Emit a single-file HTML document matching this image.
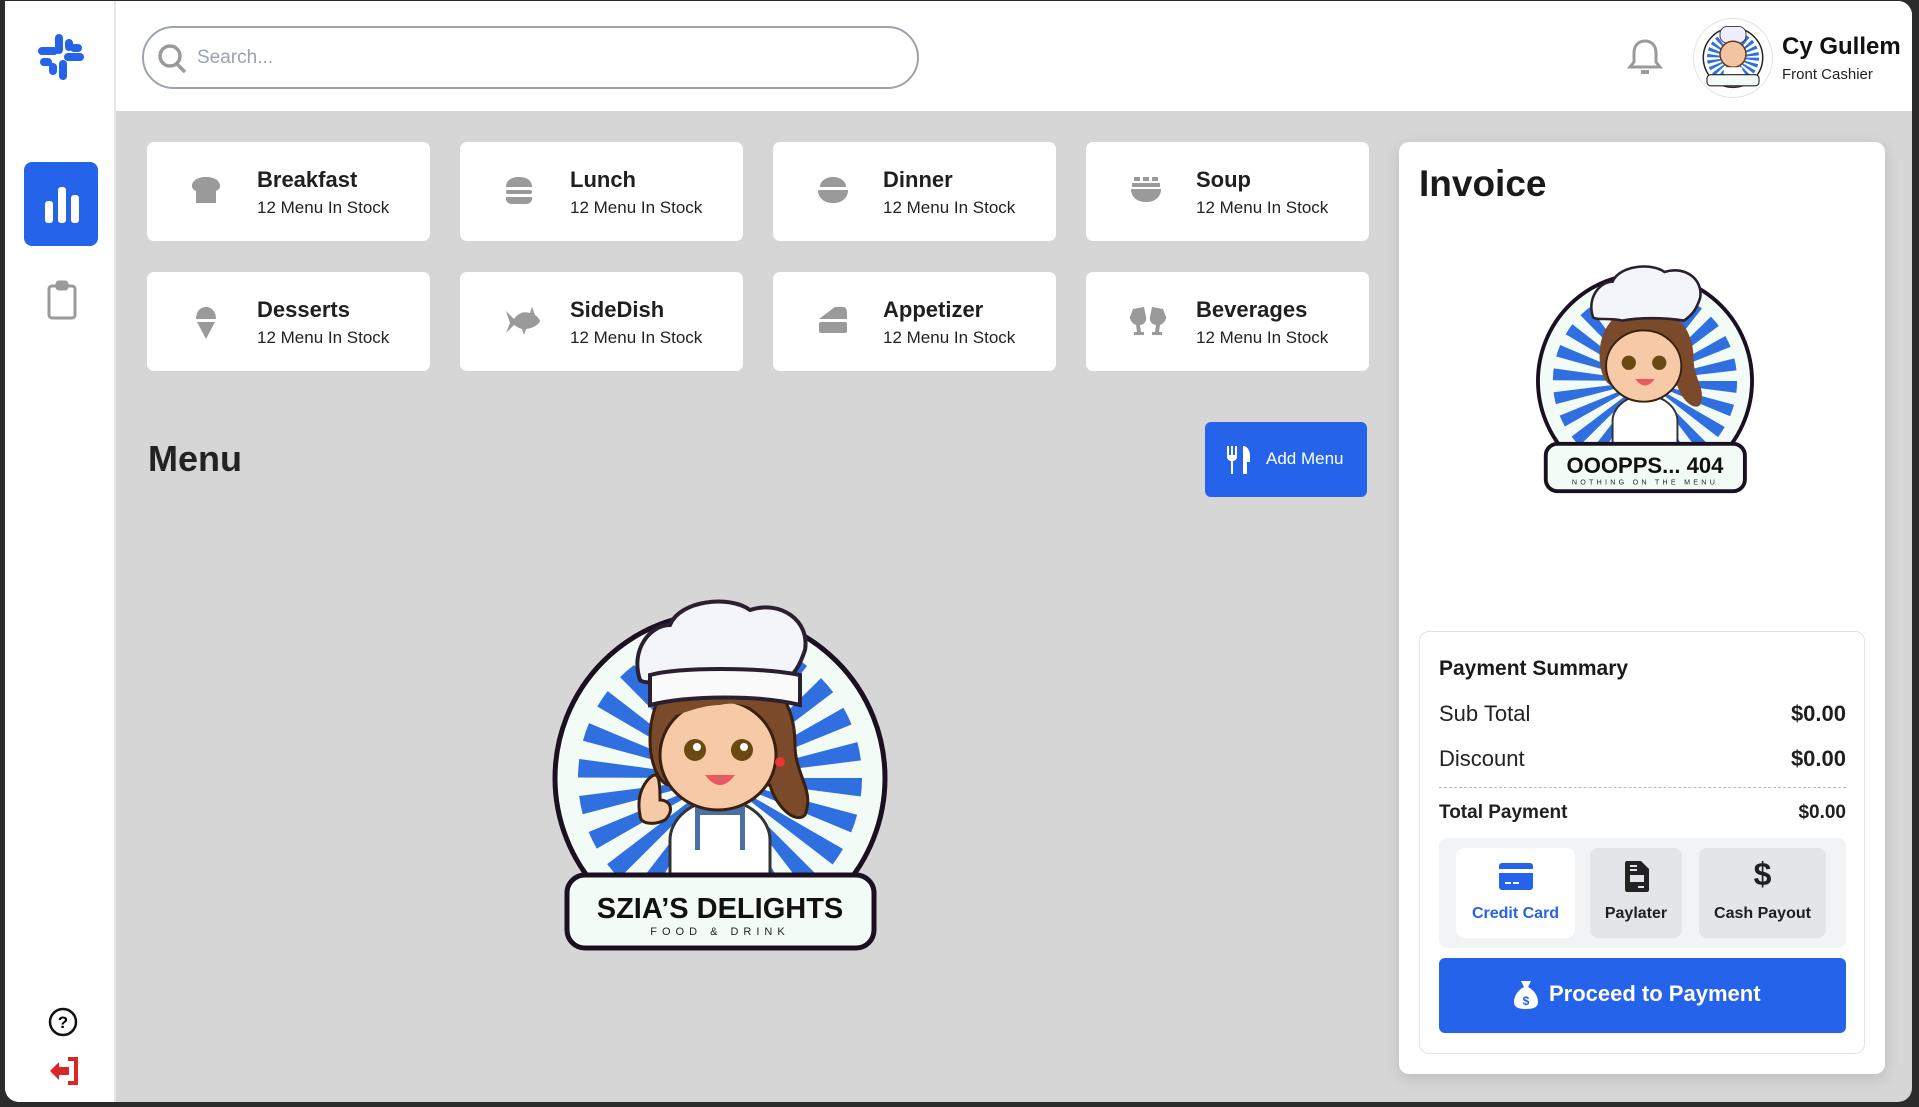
<!DOCTYPE html>
<html><head><meta charset="utf-8"><style>
*{box-sizing:border-box;margin:0;padding:0}
body{width:1919px;height:1107px;background:#2b2b2b;font-family:"Liberation Sans",sans-serif;position:relative;overflow:hidden;color:#1f1f1f}
#app{position:absolute;left:5px;top:1px;width:1907px;height:1101px;background:#d6d6d6;border-radius:0 14px 14px 14px;overflow:hidden}
#side{position:absolute;left:0;top:0;width:111px;height:100%;background:#fff;border-right:2px solid #e6e6e6}
#head{position:absolute;left:111px;top:0;right:0;height:110px;background:#fff}
.abs{position:absolute}
.card{position:absolute;width:283px;height:99px;background:#fff;border-radius:7px}
.card svg{position:absolute;left:44px;top:33px}
.card .t{position:absolute;left:110px;top:25px;font-size:22px;font-weight:bold}
.card .s{position:absolute;left:110px;top:56px;font-size:17px;color:#222}
</style></head><body>
<div id="app">
<div id="side">
 <svg class="abs" style="left:33px;top:33px" width="46" height="46" viewBox="0 0 46 46" fill="#2563eb">
  <rect x="17" y="0" width="8" height="20" rx="4"/><rect x="27" y="5" width="8" height="12" rx="4"/>
  <rect x="0" y="13" width="20" height="8" rx="4"/><rect x="26" y="19" width="20" height="8" rx="4"/>
  <rect x="21" y="26" width="8" height="20" rx="4"/><rect x="11" y="29" width="8" height="12" rx="4"/>
  <rect x="2" y="24" width="12" height="8" rx="4"/><rect x="32" y="10" width="12" height="8" rx="4"/>
 </svg>
 <div class="abs" style="left:19px;top:161px;width:74px;height:84px;background:#2563eb;border-radius:8px"></div>
 <svg class="abs" style="left:40px;top:186px" width="34" height="36" viewBox="0 0 34 36" fill="#fff"><rect x="0" y="14" width="8" height="22" rx="3"/><rect x="13" y="0" width="8" height="36" rx="3"/><rect x="26" y="8" width="8" height="28" rx="3"/></svg>
 <svg class="abs" style="left:42px;top:279px" width="32" height="40" viewBox="0 0 32 40" fill="none" stroke="#9a9a9a" stroke-width="3"><rect x="2" y="6" width="26" height="32" rx="3"/><rect x="10" y="2" width="10" height="7" rx="2" fill="#9a9a9a"/></svg>
 <svg class="abs" style="left:43px;top:1006px" width="30" height="30" viewBox="0 0 30 30"><circle cx="15" cy="15" r="13" fill="none" stroke="#111" stroke-width="2.5"/><text x="15" y="21" font-size="17" font-weight="bold" text-anchor="middle" font-family="Liberation Sans">?</text></svg>
 <svg class="abs" style="left:43px;top:1056px" width="32" height="28" viewBox="0 0 32 28"><path d="M20 2h8v24h-8" fill="none" stroke="#dc2626" stroke-width="4"/><path d="M2 14l9-9v5h10v8H11v5z" fill="#dc2626"/></svg>
</div>
<div id="head">
 <div class="abs" style="left:26px;top:25px;width:777px;height:63px;border:2px solid #9ca3af;border-radius:32px"></div>
 <svg class="abs" style="left:41px;top:42px" width="32" height="32" viewBox="0 0 32 32" fill="none" stroke="#9a9a9a" stroke-width="3.5"><circle cx="13" cy="13" r="10"/><path d="M20 21l8 8"/></svg>
 <div class="abs" style="left:81px;top:46px;font-size:19px;color:#9ca3af">Search...</div>
 <svg class="abs" style="left:1511px;top:36px" width="36" height="40" viewBox="0 0 36 40" fill="none" stroke="#9a9a9a" stroke-width="3"><path d="M18 4c-7 0-11 5-11 12v9l-4 5h30l-4-5v-9c0-7-4-12-11-12z"/><path d="M14 35h8" stroke-width="4"/></svg>
 <div class="abs" style="left:1577px;top:17px;width:80px;height:80px;border-radius:50%;border:1px solid #e2e2e2;overflow:hidden">
  <svg width="78" height="78" viewBox="-30 -20 420 420"><circle cx="180" cy="188" r="160" fill="#fff" stroke="#222" stroke-width="8"/><circle cx="180" cy="188" r="70" fill="none" stroke="#2f6fdf" stroke-width="140" stroke-dasharray="9.16 9.16"/><rect x="110" y="20" width="140" height="90" rx="40" fill="#eef" stroke="#333" stroke-width="5"/><circle cx="180" cy="170" r="70" fill="#f2c4a0" stroke="#5a3a22" stroke-width="8"/><rect x="130" y="240" width="100" height="70" fill="#fff"/><rect x="40" y="280" width="280" height="60" rx="20" fill="#f3fbf7" stroke="#222" stroke-width="6"/></svg>
 </div>
 <div class="abs" style="left:1666px;top:32px;font-size:24px;font-weight:bold;color:#111">Cy Gullem</div>
 <div class="abs" style="left:1666px;top:65px;font-size:15px;color:#222">Front Cashier</div>
</div>

<div class="card" style="left:142px;top:141px"><svg width="30" height="30" viewBox="0 0 30 30" fill="#9a9a9a"><path d="M15 2C6 2 1 6 1 11c0 3 2 4 4 5v12h20V16c2-1 4-2 4-5 0-5-5-9-14-9z"/></svg><div class="t">Breakfast</div><div class="s">12 Menu In Stock</div></div>
<div class="card" style="left:455px;top:141px"><svg width="30" height="30" viewBox="0 0 30 30" fill="#9a9a9a"><path d="M2 12C2 5 8 2 15 2s13 3 13 10z"/><rect x="2" y="15" width="26" height="4" rx="2"/><path d="M2 22h26v2c0 3-3 5-6 5H8c-3 0-6-2-6-5z"/></svg><div class="t">Lunch</div><div class="s">12 Menu In Stock</div></div>
<div class="card" style="left:768px;top:141px"><svg width="32" height="30" viewBox="0 0 32 30" fill="#9a9a9a"><path d="M3 12c0-6 6-10 13-10s13 4 13 10z"/><path d="M1 15h30c0 8-6 13-15 13S1 23 1 15z"/></svg><div class="t">Dinner</div><div class="s">12 Menu In Stock</div></div>
<div class="card" style="left:1081px;top:141px"><svg width="32" height="30" viewBox="0 0 32 30" fill="#9a9a9a"><path d="M2 8h28v4H2zM4 2h6v4H4zM13 2h6v4h-6zM22 2h6v4h-6z"/><path d="M1 14h30c0 8-6 13-15 13S1 22 1 14z"/></svg><div class="t">Soup</div><div class="s">12 Menu In Stock</div></div>
<div class="card" style="left:142px;top:271px"><svg width="30" height="36" viewBox="0 0 30 36" fill="#9a9a9a"><path d="M5 14c0-7 4-12 10-12s10 5 10 12z"/><path d="M6 17h18l-9 17z"/></svg><div class="t">Desserts</div><div class="s">12 Menu In Stock</div></div>
<div class="card" style="left:455px;top:271px"><svg width="36" height="32" viewBox="0 0 36 32" fill="#9a9a9a"><path d="M2 6l8 8c4-6 10-8 16-6l2-6 3 8c3 2 5 5 5 6s-4 7-14 8l-2 6-2-6c-4-1-6-3-8-4l-8 8 4-10z"/></svg><div class="t">SideDish</div><div class="s">12 Menu In Stock</div></div>
<div class="card" style="left:768px;top:271px"><svg width="32" height="30" viewBox="0 0 32 30" fill="#9a9a9a"><path d="M2 14L18 2h8c3 0 4 3 4 6v6z"/><rect x="2" y="17" width="28" height="11" rx="2"/></svg><div class="t">Appetizer</div><div class="s">12 Menu In Stock</div></div>
<div class="card" style="left:1081px;top:271px"><svg width="36" height="32" viewBox="0 0 36 32" fill="#9a9a9a"><path d="M3 4l11-2 2 10c1 5-3 8-6 8l1 7h3v3H4v-3h3l-1-7c-3-1-6-4-6-8zM33 4L22 2l-2 10c-1 5 3 8 6 8l-1 7h-3v3h10v-3h-3l1-7c3-1 6-4 6-8z"/></svg><div class="t">Beverages</div><div class="s">12 Menu In Stock</div></div>

<div class="abs" style="left:143px;top:437px;font-size:36px;font-weight:bold;color:#222">Menu</div>
<div class="abs" style="left:1200px;top:421px;width:162px;height:75px;background:#2563eb;border-radius:6px"></div>
<svg class="abs" style="left:1220px;top:445px" width="26" height="28" viewBox="0 0 26 28" fill="#fff"><path d="M2 0h2v9h2V0h2v9h2V0h2v11c0 2-2 4-4 4v13H6V15c-2 0-4-2-4-4z"/><path d="M18 0c4 0 7 4 7 10v6h-3v12h-4z"/></svg>
<div class="abs" style="left:1261px;top:448px;font-size:17px;color:#fff">Add Menu</div>

<svg class="abs" style="left:535px;top:589px" width="360" height="370" viewBox="0 0 360 370">
 <circle cx="180" cy="188" r="165" fill="#f3fbf7" stroke="#1a1020" stroke-width="5"/>
 <circle cx="180" cy="188" r="71" fill="none" stroke="#2f6fdf" stroke-width="142" stroke-dasharray="9.3 9.3"/>
 <path d="M130 250c0-20 20-40 50-40s50 20 50 40v40H130z" fill="#fff" stroke="#333" stroke-width="3"/>
 <path d="M155 215h50v45h-50z" fill="#4a6fa0"/><rect x="160" y="225" width="40" height="35" fill="#fff"/>
 <path d="M110 150c0-50 30-75 70-75s75 25 75 80c0 30 20 45 10 70-10 10-30-10-35-30l-100 0c-10 0-20-20-20-45z" fill="#7a4a2a" stroke="#3a2010" stroke-width="3"/>
 <ellipse cx="178" cy="165" rx="58" ry="55" fill="#f6caa6" stroke="#3a2010" stroke-width="3"/>
 <path d="M120 130c10-30 40-40 60-40s50 10 60 40c-20-10-40-20-60-15-20 0-40 10-60 15z" fill="#7a4a2a"/>
 <circle cx="155" cy="160" r="11" fill="#6a4a10"/><circle cx="202" cy="160" r="11" fill="#6a4a10"/>
 <circle cx="157" cy="157" r="4" fill="#fff"/><circle cx="204" cy="157" r="4" fill="#fff"/>
 <path d="M165 185q15 20 30 0z" fill="#e85a60"/>
 <circle cx="240" cy="172" r="5" fill="#e33"/>
 <path d="M100 90c-10-30 10-55 30-55 10-25 60-30 80-15 30-10 60 10 55 40-5 15-10 25-25 35-30-5-70-5-95 0-20-5-40-0-45-5z" fill="#f4f5fa" stroke="#2a2030" stroke-width="4"/>
 <path d="M110 85c30-8 110-8 150 0v30c-40-10-110-10-150 0z" fill="#fafafa" stroke="#2a2030" stroke-width="4"/>
 <path d="M100 225c-5-25 10-40 15-40s5 15 5 25c10 0 15 10 5 20-10 5-25 5-25-5z" fill="#f6caa6" stroke="#3a2010" stroke-width="3"/>
 <rect x="27" y="285" width="307" height="73" rx="18" fill="#f3fbf7" stroke="#1a1020" stroke-width="5"/>
 <text x="180" y="328" font-family="Liberation Sans" font-weight="bold" font-size="29" text-anchor="middle" fill="#111">SZIA’S DELIGHTS</text>
 <text x="180" y="345" font-family="Liberation Sans" font-size="11" letter-spacing="5" text-anchor="middle" fill="#222">FOOD &amp; DRINK</text>
</svg>

<div class="abs" style="left:1394px;top:141px;width:486px;height:932px;background:#fff;border-radius:10px;box-shadow:0 4px 16px rgba(0,0,0,.12)"></div>
<div class="abs" style="left:1414px;top:162px;font-size:37px;font-weight:bold;color:#1a1a1a">Invoice</div>
<svg class="abs" style="left:1522px;top:258px" width="236" height="240" viewBox="0 0 360 370">
 <circle cx="180" cy="188" r="165" fill="#f3fbf7" stroke="#1a1020" stroke-width="6"/>
 <circle cx="180" cy="188" r="71" fill="none" stroke="#2f6fdf" stroke-width="142" stroke-dasharray="9.3 9.3"/>
 <path d="M130 250c0-20 20-40 50-40s50 20 50 40v40H130z" fill="#fff" stroke="#333" stroke-width="3"/>
 <path d="M110 150c0-50 30-75 70-75s75 25 75 80c0 30 20 45 10 70-10 10-30-10-35-30l-100 0c-10 0-20-20-20-45z" fill="#7a4a2a"/>
 <ellipse cx="178" cy="165" rx="58" ry="55" fill="#f6caa6" stroke="#3a2010" stroke-width="3"/>
 <circle cx="155" cy="160" r="11" fill="#6a4a10"/><circle cx="202" cy="160" r="11" fill="#6a4a10"/>
 <path d="M165 185q15 20 30 0z" fill="#e85a60"/>
 <path d="M100 90c-10-30 10-55 30-55 10-25 60-30 80-15 30-10 60 10 55 40-5 15-10 25-25 35-30-5-70-5-95 0-20-5-40-0-45-5z" fill="#f4f5fa" stroke="#2a2030" stroke-width="4"/>
 <rect x="27" y="285" width="307" height="73" rx="18" fill="#f3fbf7" stroke="#1a1020" stroke-width="6"/>
 <text x="180" y="330" font-family="Liberation Sans" font-weight="bold" font-size="34" text-anchor="middle" fill="#111">OOOPPS... 404</text>
 <text x="180" y="348" font-family="Liberation Sans" font-size="11" letter-spacing="5" text-anchor="middle" fill="#222">NOTHING ON THE MENU</text>
</svg>

<div class="abs" style="left:1414px;top:630px;width:446px;height:423px;border:1px solid #e2e2e8;border-radius:10px;background:#fff"></div>
<div class="abs" style="left:1434px;top:656px;font-size:21px;font-weight:bold;color:#1a1a1a">Payment Summary</div>
<div class="abs" style="left:1434px;top:700px;font-size:22px;color:#222">Sub Total</div>
<div class="abs" style="left:1434px;top:700px;width:407px;text-align:right;font-size:22px;font-weight:bold">$0.00</div>
<div class="abs" style="left:1434px;top:745px;font-size:22px;color:#222">Discount</div>
<div class="abs" style="left:1434px;top:745px;width:407px;text-align:right;font-size:22px;font-weight:bold">$0.00</div>
<div class="abs" style="left:1434px;top:786px;width:407px;border-top:1.5px dashed #bbb"></div>
<div class="abs" style="left:1434px;top:801px;font-size:19px;font-weight:bold">Total Payment</div>
<div class="abs" style="left:1434px;top:801px;width:407px;text-align:right;font-size:19px;font-weight:bold">$0.00</div>
<div class="abs" style="left:1434px;top:837px;width:407px;height:110px;background:#f2f3f5;border-radius:8px"></div>
<div class="abs" style="left:1451px;top:847px;width:119px;height:90px;background:#fff;border-radius:8px"></div>
<div class="abs" style="left:1585px;top:847px;width:92px;height:90px;background:#e4e5e9;border-radius:8px"></div>
<div class="abs" style="left:1694px;top:847px;width:127px;height:90px;background:#e4e5e9;border-radius:8px"></div>
<svg class="abs" style="left:1494px;top:862px" width="34" height="27" viewBox="0 0 34 27"><rect x="0" y="0" width="34" height="27" rx="3" fill="#2563eb"/><rect x="0" y="6" width="34" height="4" fill="#fff"/><rect x="6" y="19" width="6" height="2" fill="#fff"/><rect x="14" y="19" width="6" height="2" fill="#fff"/></svg>
<div class="abs" style="left:1451px;top:904px;width:119px;text-align:center;font-size:16px;font-weight:bold;color:#2563eb">Credit Card</div>
<svg class="abs" style="left:1620px;top:860px" width="24" height="31" viewBox="0 0 24 31" fill="#222"><path d="M2 0h14l8 8v21c0 1-1 2-2 2H2c-1 0-2-1-2-2V2c0-1 1-2 2-2z"/><rect x="5" y="4" width="7" height="2" fill="#e4e5e9"/><rect x="5" y="8" width="7" height="2" fill="#e4e5e9"/><rect x="5" y="14" width="14" height="7" fill="#e4e5e9"/><rect x="13" y="25" width="6" height="2" fill="#e4e5e9"/></svg>
<div class="abs" style="left:1585px;top:904px;width:92px;text-align:center;font-size:16px;font-weight:bold">Paylater</div>
<div class="abs" style="left:1694px;top:855px;width:127px;text-align:center;font-size:32px;font-weight:bold">$</div>
<div class="abs" style="left:1694px;top:904px;width:127px;text-align:center;font-size:16px;font-weight:bold">Cash Payout</div>
<div class="abs" style="left:1434px;top:957px;width:407px;height:75px;background:#2563eb;border-radius:6px"></div>
<svg class="abs" style="left:1508px;top:980px" width="26" height="28" viewBox="0 0 26 28"><path d="M8 0h10l-3 6c6 3 10 9 10 15 0 5-4 7-12 7S1 26 1 21c0-6 4-12 10-15z" fill="#fff"/><text x="13" y="24" font-size="12" font-weight="bold" text-anchor="middle" fill="#2563eb" font-family="Liberation Sans">$</text></svg>
<div class="abs" style="left:1544px;top:980px;font-size:22px;font-weight:bold;color:#fff">Proceed to Payment</div>
</div>
</body></html>
